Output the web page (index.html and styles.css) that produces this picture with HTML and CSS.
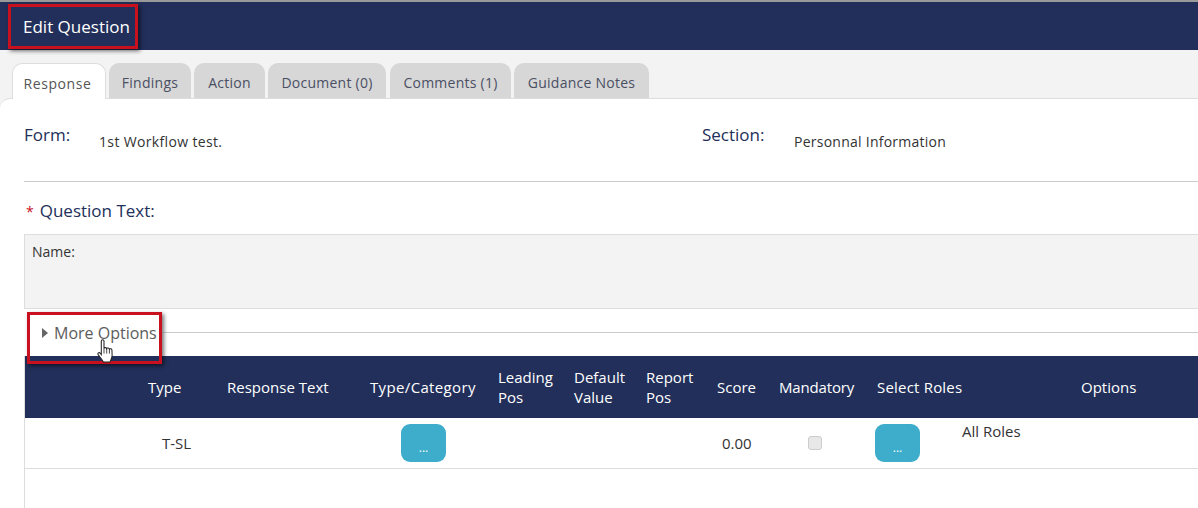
FILE: index.html
```html
<!DOCTYPE html>
<html lang="en">
<head>
<meta charset="utf-8">
<title>Edit Question</title>
<link rel="stylesheet" href="styles.css">
</head>
<body>
<header class="topbar"><h1 class="title">Edit Question</h1></header>
<div class="callout callout-title"></div>
<nav class="tabs">
  <a class="tab active t1">Response</a>
  <a class="tab t2">Findings</a>
  <a class="tab t3">Action</a>
  <a class="tab t4">Document (0)</a>
  <a class="tab t5">Comments (1)</a>
  <a class="tab t6">Guidance Notes</a>
</nav>
<main class="panel">
  <section class="meta">
    <div class="meta-item form"><span class="meta-label">Form:</span><span class="meta-value">1st Workflow test.</span></div>
    <div class="meta-item section"><span class="meta-label">Section:</span><span class="meta-value">Personnal Information</span></div>
  </section>
  <h2 class="qlabel"><span class="req">*</span>Question Text:</h2>
  <div class="qbox">Name:</div>
  <div class="more">
    <span class="arrow"></span><span class="more-text">More Options</span><span class="more-line"></span>
  </div>
  <div class="table">
    <div class="grid thead">
      <div>Type</div><div>Response Text</div><div class="h-cat">Type/Category</div><div>Leading<br>Pos</div><div>Default<br>Value</div><div>Report<br>Pos</div><div>Score</div><div class="h-man">Mandatory</div><div class="h-sel">Select Roles</div><div>Options</div>
    </div>
    <div class="grid trow">
      <div class="c-type">T-SL</div><div></div><div><button class="dots c-btn">...</button></div><div></div><div></div><div></div><div class="c-score">0.00</div><div><span class="check"></span></div>
      <div class="c-roles"><button class="dots">...</button><span class="roles-text">All Roles</span></div><div></div>
    </div>
  </div>
</main>
<div class="callout callout-more"></div>
<svg class="cursor" width="19" height="25" viewBox="0 0 18 24" aria-hidden="true"><path d="M4 2c0-1.600 2.600-1.600 2.600 0v7c.4-1 2.400-1 2.600.2.500-.9 2.400-.8 2.600.5.600-.7 2.300-.4 2.400.9l.2 5c0 2.600-1.200 4.400-2 6.400H6c-1.200-2.200-3.600-5-5-7-.8-1.200.7-2.600 1.900-1.500L4 15z" fill="#fff" stroke="#222" stroke-width="1"/><path d="M6.600 9v5M9.200 9.200V14M11.800 9.700V14" stroke="#222" stroke-width=".8" fill="none"/></svg>
</body>
</html>
```
FILE: styles.css
```css
* { box-sizing: border-box; }
html, body { margin: 0; height: 508px; overflow: hidden; }
body {
  position: relative;
  background: #f4f3f4;
  font-family: "Open Sans", "Liberation Sans", sans-serif;
  font-size: 14px;
  color: #333;
}
.topbar {
  height: 50px;
  background: #222f5a;
  border-top: 2px solid #9a9a9a;
  padding: 0 0 0 23px;
  display: flex;
  align-items: center;
}
.title { margin: 0; font-size: 17px; font-weight: 400; color: #fff; }
.callout { position: absolute; border: 3px solid #c9101f; box-shadow: 2px 2px 4px rgba(0,0,0,.55); }
.callout-title { left: 8px; top: 4px; width: 130px; height: 45px; }
.callout-more { left: 27px; top: 312px; width: 135px; height: 52px; }
.tabs { height: 48px; padding: 13px 0 0 12px; display: flex; position: relative; z-index: 1; }
.tab {
  height: 35px;
  background: #d7d7d7;
  border-radius: 10px 10px 0 0;
  color: #4a4f63;
  font-size: 14px;
  letter-spacing: .25px;
  display: flex; align-items: center; justify-content: center;
  padding-top: 4px;
}
.t1 { width: 94px; margin-right: 3px; }
.t2 { width: 82px; margin-right: 3px; }
.t3 { width: 71px; margin-right: 3px; }
.t4 { width: 118px; margin-right: 4px; }
.t5 { width: 121px; margin-right: 3px; }
.t6 { width: 135px; }
.tab.active { background: #fff; border: 1px solid #ddd; border-bottom: 0; color: #555; height: 36px; letter-spacing: .6px; padding-right: 3px; }
.panel {
  position: relative;
  background: #fff;
  border-top: 1px solid #ddd;
  border-top-left-radius: 10px;
  height: 410px;
  padding-left: 24px;
}
.meta {
  height: 83px;
  border-bottom: 1px solid #ccc;
  display: flex;
}
.meta-item { display: flex; padding-top: 25px; }
.form { width: 678px; }
.meta-label { font-size: 17px; font-weight: 500; color: #222f5a; line-height: 22px; }
.form .meta-label { width: 75px; }
.section .meta-label { width: 92px; }
.meta-value { font-size: 14px; letter-spacing: .25px; color: #333; line-height: 22px; padding-top: 7px; }
.form .meta-value { letter-spacing: .35px; }
.qlabel { margin: 18px 0 11px 2px; font-size: 17px; line-height: 22px; font-weight: 500; color: #222f5a; }
.req { color: #c9101f; font-weight: 400; margin-right: 6px; font-size: 14px; }
.qbox {
  height: 75px;
  background: #f4f3f4;
  border: 1px solid #ddd;
  border-right: 0;
  padding: 7px 7px;
  font-size: 14px;
  line-height: 20px;
}
.more { height: 47px; display: flex; align-items: center; padding: 0 0 0 18px; }
.arrow { width: 0; height: 0; border-left: 6px solid #666; border-top: 5px solid transparent; border-bottom: 5px solid transparent; margin-right: 6px; }
.more-text { font-size: 16px; font-weight: 500; color: #5c5c5c; margin-right: 6px; }
.more-line { flex: 1; border-top: 1px solid #ccc; }
.table { border-left: 1px solid #ddd; height: 153px; }
.grid {
  display: grid;
  grid-template-columns: 79px 143px 128px 76px 72px 71px 62px 98px 204px 1fr;
  padding-left: 123px;
}
.thead {
  height: 62px;
  background: #222f5a;
  color: #fff;
  font-size: 15px;
  line-height: 20px;
  align-items: center;
}
.h-cat { letter-spacing: .35px; }
.h-man { letter-spacing: -.15px; }
.h-sel { letter-spacing: .2px; }
.trow { height: 51px; border-bottom: 1px solid #ddd; font-size: 15px; align-items: center; }
.c-type { padding-left: 14px; }
.c-score { padding-left: 5px; }
.dots {
  width: 45px; height: 38px;
  background: #3dadcb; border: 0; border-radius: 9px;
  color: #fff; font: 12px "Open Sans", sans-serif;
  padding: 8px 0 0; display: block;
}
.c-btn { margin-left: 31px; }
.check {
  display: block; width: 14px; height: 14px; margin-left: 29px;
  background: #e8e8e8; border: 1px solid #ccc; border-radius: 3px;
}
.c-roles { display: flex; margin-left: -2px; align-items: center; }
.roles-text { margin-left: 42px; margin-top: -24px; line-height: 20px; }
.cursor { position: absolute; left: 97px; top: 339px; }
```
